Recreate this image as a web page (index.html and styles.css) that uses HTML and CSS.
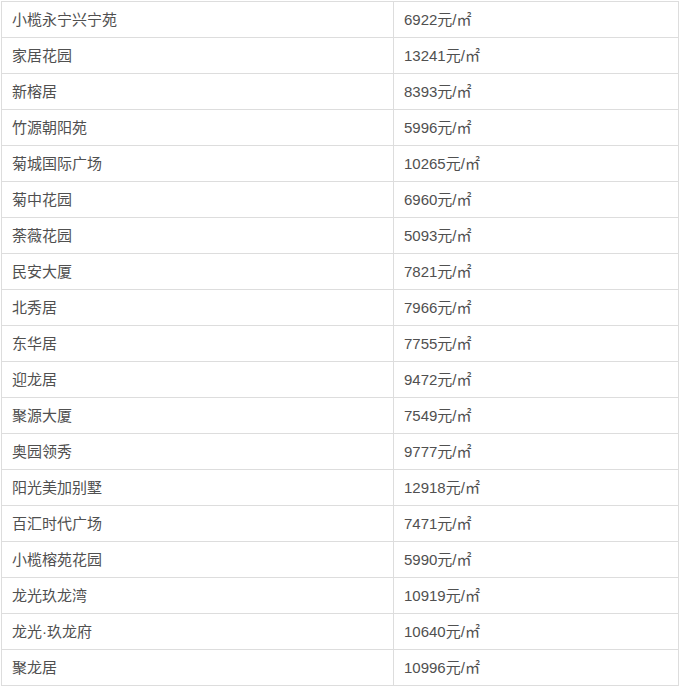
FILE: index.html
```html
<!DOCTYPE html>
<html lang="zh">
<head>
<meta charset="utf-8">
<link rel="stylesheet" href="styles.css">
</head>
<body>
<table class="price-table">
<tbody>
<tr><td class="name">小榄永宁兴宁苑</td><td class="price">6922元/㎡</td></tr>
<tr><td class="name">家居花园</td><td class="price">13241元/㎡</td></tr>
<tr><td class="name">新榕居</td><td class="price">8393元/㎡</td></tr>
<tr><td class="name">竹源朝阳苑</td><td class="price">5996元/㎡</td></tr>
<tr><td class="name">菊城国际广场</td><td class="price">10265元/㎡</td></tr>
<tr><td class="name">菊中花园</td><td class="price">6960元/㎡</td></tr>
<tr><td class="name">荼薇花园</td><td class="price">5093元/㎡</td></tr>
<tr><td class="name">民安大厦</td><td class="price">7821元/㎡</td></tr>
<tr><td class="name">北秀居</td><td class="price">7966元/㎡</td></tr>
<tr><td class="name">东华居</td><td class="price">7755元/㎡</td></tr>
<tr><td class="name">迎龙居</td><td class="price">9472元/㎡</td></tr>
<tr><td class="name">聚源大厦</td><td class="price">7549元/㎡</td></tr>
<tr><td class="name">奥园领秀</td><td class="price">9777元/㎡</td></tr>
<tr><td class="name">阳光美加别墅</td><td class="price">12918元/㎡</td></tr>
<tr><td class="name">百汇时代广场</td><td class="price">7471元/㎡</td></tr>
<tr><td class="name">小榄榕苑花园</td><td class="price">5990元/㎡</td></tr>
<tr><td class="name">龙光玖龙湾</td><td class="price">10919元/㎡</td></tr>
<tr><td class="name">龙光·玖龙府</td><td class="price">10640元/㎡</td></tr>
<tr><td class="name">聚龙居</td><td class="price">10996元/㎡</td></tr>
</tbody>
</table>
</body>
</html>
```
FILE: styles.css
```css
html, body {
  margin: 0;
  padding: 0;
  background: #fff;
}
body {
  padding: 1px 0 0 1px;
  font-family: "Liberation Sans", "Noto Sans CJK SC", sans-serif;
  font-size: 15px;
  color: #505050;
}
.price-table {
  border-collapse: collapse;
  width: 678px;
  table-layout: fixed;
}
.price-table td {
  border: 1px solid #dddddd;
  height: 36px;
  padding: 0 10px;
  box-sizing: border-box;
  vertical-align: middle;
  white-space: nowrap;
  line-height: 20px;
}
.price-table td.name {
  width: 392px;
}
```
